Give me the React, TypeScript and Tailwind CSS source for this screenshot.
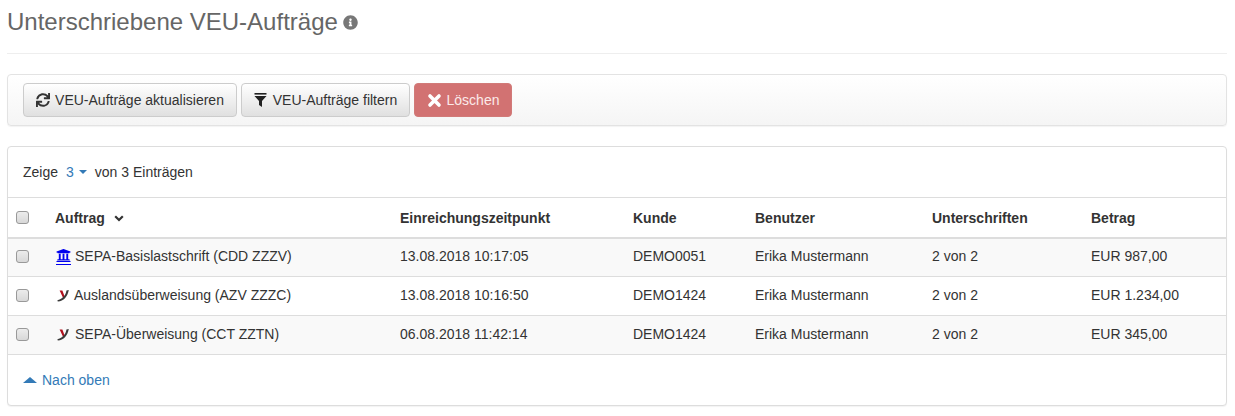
import React from "react";
import { FaSync, FaInfoCircle, FaUniversity } from "react-icons/fa";

function Check() {
  return <span className="block w-[13px] h-[13px] rounded-[3px] border border-[#999] bg-gradient-to-b from-[#ececec] to-[#d8d8d8]" />;
}

function Logo() {
  return (
    <svg width="12" height="12" viewBox="0 0 12 12" className="block">
      <path d="M2.6 0.6 L5.4 0.6 L8 7.5 L6.4 8.6 Z" fill="#b0101c" />
      <path d="M11.8 0 L9.4 0.4 C9 4 6.8 8.4 0.4 10.2 L0.8 11.6 C6.8 11 10.4 7 11.8 0 Z" fill="#3a3a3a" />
    </svg>
  );
}

const rows = [
  { icon: "bank", name: "SEPA-Basislastschrift (CDD ZZZV)", date: "13.08.2018 10:17:05", kunde: "DEMO0051", betrag: "EUR 987,00" },
  { icon: "logo", name: "Auslandsüberweisung (AZV ZZZC)", date: "13.08.2018 10:16:50", kunde: "DEMO1424", betrag: "EUR 1.234,00" },
  { icon: "logo", name: "SEPA-Überweisung (CCT ZZTN)", date: "06.08.2018 11:42:14", kunde: "DEMO1424", betrag: "EUR 345,00" },
];

export default function App() {
  return (
    <div className="w-[1235px] h-[416px] overflow-hidden bg-white pl-[7px] pr-[8px] text-[14px] leading-[20px] text-[#333] font-['Liberation_Sans',Arial,sans-serif]">
      <div className="h-[54px] border-b border-[#eeeeee] flex items-start pt-[7px]">
        <h1 className="text-[24px] leading-[30px] font-normal text-[#666]">Unterschriebene VEU-Aufträge</h1>
        <FaInfoCircle className="ml-[5px] mt-[8px] text-[#777]" size={15} />
      </div>

      <div className="mt-[20px] h-[52px] rounded-[4px] border border-[#e3e3e3] bg-gradient-to-b from-white to-[#f5f5f5] shadow-[0_1px_1px_rgba(0,0,0,0.05)] flex items-center gap-[4px] pl-[15px]">
        <button className="h-[34px] w-[214px] rounded-[4px] border border-[#cccccc] bg-gradient-to-b from-white to-[#e0e0e0] flex items-center justify-center gap-[5px] text-[#333]">
          <FaSync size={14} />
          <span>VEU-Aufträge aktualisieren</span>
        </button>
        <button className="h-[34px] w-[169px] rounded-[4px] border border-[#cccccc] bg-gradient-to-b from-white to-[#e0e0e0] flex items-center justify-center gap-[6px] text-[#333]">
          <svg width="13" height="14" viewBox="0 0 13 14">
            <rect x="0.5" y="0" width="12" height="1.6" fill="#222" />
            <path d="M0.5 3 H12.5 L8 8 V14 L5 12 V8 Z" fill="#222" />
          </svg>
          <span>VEU-Aufträge filtern</span>
        </button>
        <button className="h-[34px] w-[98px] rounded-[4px] border border-[#d17a78] bg-[#d27272] flex items-center justify-center gap-[5px] text-white">
          <svg width="15" height="15" viewBox="0 0 15 15">
            <path d="M3 3 L12 12 M12 3 L3 12" fill="none" stroke="#ffffff" strokeWidth="3.6" strokeLinecap="round" />
          </svg>
          <span className="text-[#fbeaea]">Löschen</span>
        </button>
      </div>

      <div className="mt-[20px] h-[260px] rounded-[4px] border border-[#dddddd] shadow-[0_1px_1px_rgba(0,0,0,0.05)] bg-white">
        <div className="h-[50px] flex items-center pl-[15px]">
          <span>Zeige</span>
          <span className="ml-[8px] text-[#337ab7]">3</span>
          <span className="ml-[5px] w-0 h-0 border-x-[4px] border-x-transparent border-t-[4px] border-t-[#337ab7]" />
          <span className="ml-[8px]">von 3 Einträgen</span>
        </div>
        <table className="w-full table-fixed border-collapse">
          <colgroup>
            <col className="w-[39px]" />
            <col className="w-[345px]" />
            <col className="w-[233px]" />
            <col className="w-[122px]" />
            <col className="w-[177px]" />
            <col className="w-[159px]" />
            <col />
          </colgroup>
          <thead>
            <tr className="h-[40px] border-t border-b-2 border-[#dddddd] font-bold">
              <th className="pl-[8px] text-left"><Check /></th>
              <th className="px-[8px] pt-[2px] text-left">
                <span className="inline-flex items-center gap-[9px]">
                  Auftrag
                  <svg width="10" height="7" viewBox="0 0 10 7"><path d="M1.2 1.2 L5 5 L8.8 1.2" fill="none" stroke="#333" strokeWidth="2.2" /></svg>
                </span>
              </th>
              <th className="px-[8px] pt-[2px] text-left">Einreichungszeitpunkt</th>
              <th className="px-[8px] pt-[2px] text-left">Kunde</th>
              <th className="px-[8px] pt-[2px] text-left">Benutzer</th>
              <th className="px-[8px] pt-[2px] text-left">Unterschriften</th>
              <th className="px-[8px] pt-[2px] text-left">Betrag</th>
            </tr>
          </thead>
          <tbody>
            {rows.map((r, i) => (
              <tr key={i} className={`h-[39px] border-b border-[#dddddd] ${i % 2 === 0 ? "bg-[#f9f9f9]" : "bg-white"}`}>
                <td className="pl-[8px] pb-[2px]"><Check /></td>
                <td className="px-[8px] pb-[2px]">
                  <span className="flex items-center">
                    {r.icon === "bank" ? (
                      <span className="ml-[1px] mr-[4px] border-b border-[#0000ee] pb-[1px]"><FaUniversity size={15} color="#0000ee" className="block" /></span>
                    ) : (
                      <span className={`ml-[2px] mt-[2px] ${i === 1 ? "mr-[5px]" : "mr-[6px]"}`}><Logo /></span>
                    )}
                    <span>{r.name}</span>
                  </span>
                </td>
                <td className="px-[8px] pb-[2px]">{r.date}</td>
                <td className="px-[8px] pb-[2px]">{r.kunde}</td>
                <td className="px-[8px] pb-[2px]">Erika Mustermann</td>
                <td className="px-[8px] pb-[2px]">2 von 2</td>
                <td className="px-[8px] pb-[2px]">{r.betrag}</td>
              </tr>
            ))}
          </tbody>
        </table>
        <div className="h-[50px] flex items-center pl-[15px] text-[#337ab7]">
          <span className="w-0 h-0 border-x-[7px] border-x-transparent border-b-[6px] border-b-[#337ab7] mr-[5px]" />
          <span>Nach oben</span>
        </div>
      </div>
    </div>
  );
}
